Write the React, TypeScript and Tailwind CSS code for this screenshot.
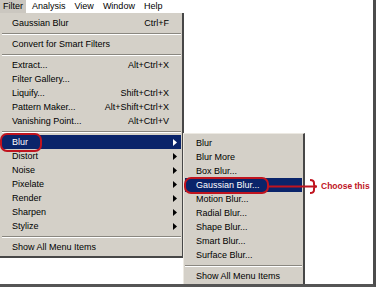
import { Fragment } from "react";

type Item = { label?: string; shortcut?: string; sub?: boolean; active?: boolean; sep?: boolean; h?: number };

const filterMenu: Item[] = [
  { label: "Gaussian Blur", shortcut: "Ctrl+F" },
  { sep: true },
  { label: "Convert for Smart Filters" },
  { sep: true },
  { label: "Extract...", shortcut: "Alt+Ctrl+X" },
  { label: "Filter Gallery..." },
  { label: "Liquify...", shortcut: "Shift+Ctrl+X" },
  { label: "Pattern Maker...", shortcut: "Alt+Shift+Ctrl+X" },
  { label: "Vanishing Point...", shortcut: "Alt+Ctrl+V" },
  { sep: true },
  { label: "Blur", sub: true, active: true },
  { label: "Distort", sub: true },
  { label: "Noise", sub: true },
  { label: "Pixelate", sub: true },
  { label: "Render", sub: true },
  { label: "Sharpen", sub: true },
  { label: "Stylize", sub: true },
  { sep: true },
  { label: "Show All Menu Items" },
];

const blurMenu: Item[] = [
  { label: "Blur" },
  { label: "Blur More" },
  { label: "Box Blur..." },
  { label: "Gaussian Blur...", active: true },
  { label: "Motion Blur..." },
  { label: "Radial Blur..." },
  { label: "Shape Blur..." },
  { label: "Smart Blur..." },
  { label: "Surface Blur..." },
  { sep: true },
  { label: "Show All Menu Items" },
];

const Arrow = ({ white }: { white?: boolean }) => (
  <svg width="4" height="7" viewBox="0 0 4 7">
    <polygon points="0,0 4,3.5 0,7" fill={white ? "#ffffff" : "#000000"} />
  </svg>
);

const MenuRows = ({ items, pl }: { items: Item[]; pl: string }) => (
  <>
    {items.map((it, i) =>
      it.sep ? (
        <div key={i} className="h-[7px] flex items-center">
          <div className="w-full border-t border-t-[#8a8780] border-b border-b-white" />
        </div>
      ) : (
        <div
          key={i}
          className={
            "h-[14px] flex items-center " +
            pl +
            (it.active ? " bg-[#0a246a] text-white" : " text-black")
          }
        >
          <span className="flex-1 whitespace-nowrap">{it.label}</span>
          {it.shortcut && <span className="whitespace-nowrap">{it.shortcut}</span>}
          <span className="w-[12px] flex justify-center">{it.sub && <Arrow white={it.active} />}</span>
        </div>
      )
    )}
  </>
);

export default function App() {
  return (
    <div className="w-[378px] h-[288px] bg-white font-['Liberation_Sans',Arial,sans-serif] text-[9px] leading-none">
      <div className="relative w-[376px] h-[287px] bg-white border-r-[3px] border-b-[3px] border-r-[#4c4c4c] border-b-[#555555] overflow-hidden">
        {/* menu bar */}
        <div className="flex h-[13px] items-stretch gap-[3px] text-black">
          {["Filter", "Analysis", "View", "Window", "Help"].map((m, i) => (
            <Fragment key={m}>
              <div className={"px-[3px] flex items-center " + (i === 0 ? "bg-[#cbc7c0]" : "")}>{m}</div>
            </Fragment>
          ))}
        </div>

        {/* Filter menu */}
        <div className="absolute left-0 top-[13px] w-[184px] bg-[#d4d0c8] border-r-2 border-b-2 border-r-[#474747] border-b-[#474747] pt-[3px] pb-[2px] pl-[2px] pr-[1px]">
          <MenuRows items={filterMenu} pl="pl-[10px] pr-[0px]" />
        </div>

        {/* Blur submenu */}
        <div className="absolute left-[183px] top-[133px] w-[122px] bg-[#d4d0c8] border-l border-t border-l-[#ece9e2] border-t-[#ece9e2] border-r-2 border-b-2 border-r-[#474747] border-b-[#474747] pt-[2px] pb-[2px] px-[1px]">
          <MenuRows items={blurMenu} pl="pl-[11px] pr-[0px]" />
        </div>

        {/* red annotations */}
        <div className="absolute left-0 top-[133px] w-[42px] h-[19px] rounded-[7px] border-2 border-[#c0141f]" />
        <div className="absolute left-[184px] top-[177px] w-[85px] h-[17px] rounded-[7px] border-2 border-[#c0141f]" />
        <svg className="absolute left-[268px] top-[178px]" width="52" height="16" viewBox="0 0 52 16">
          <line x1="0" y1="8.5" x2="46" y2="8.5" stroke="#c0141f" strokeWidth="2" />
          <path
            d="M42 2 Q46 2 46 5 L46 6.5 Q46 8.5 49 8.5 Q46 8.5 46 10.5 L46 12 Q46 15 42 15"
            fill="none"
            stroke="#c0141f"
            strokeWidth="2"
          />
        </svg>
        <div className="absolute left-[321px] top-[182px] text-[8.5px] font-bold text-[#c0141f] whitespace-nowrap">
          Choose this
        </div>
      </div>
    </div>
  );
}
